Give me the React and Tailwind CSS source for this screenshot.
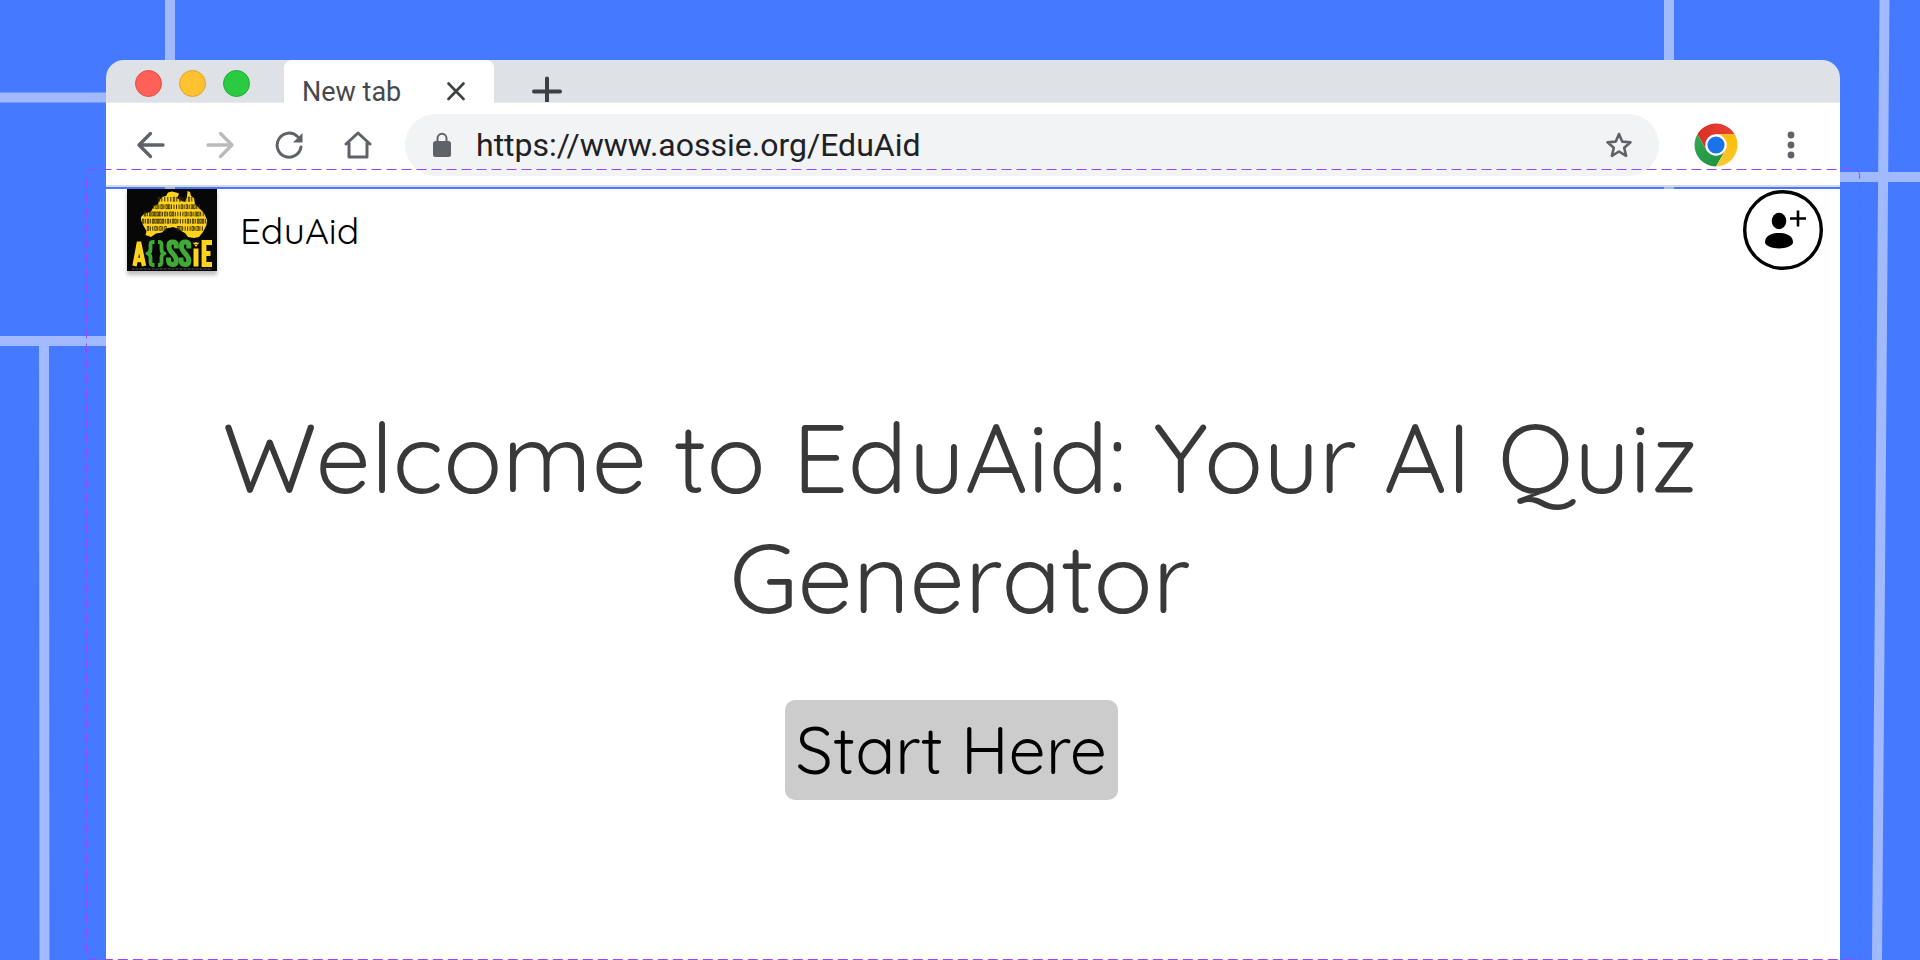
const brandFont = "font-['Quicksand',Lato,sans-serif]";

function Backdrop() {
  return (
    <svg className="absolute inset-0 h-full w-full" viewBox="0 0 1920 960" preserveAspectRatio="xMidYMin slice" aria-hidden="true">
      <g stroke="#a0b9ff" strokeWidth="10" fill="none">
        <path d="M170 0V341M1669 0V200M0 97.500H110M0 341H110M1840 177H1920" />
        <path d="M44 346L44.500 960M1884.500 0L1877 960" />
      </g>
    </svg>
  );
}

function SelectionFrame() {
  return (
    <svg className="pointer-events-none absolute -left-5 top-[109px] h-[791px] w-[calc(100%+39px)] overflow-visible" aria-hidden="true">
      <rect x="0.5" y="0.5" width="100%" height="790" rx="5" fill="none" stroke="#9747ff" strokeWidth="1" strokeDasharray="10 5" strokeDashoffset="5" />
    </svg>
  );
}

function TabStrip() {
  return (
    <div className="flex h-[43px] items-stretch rounded-t-[18px] border-b border-[#e8eaed] bg-[#dee1e6]">
      <div className="flex items-start gap-[17px] pl-[29px] pt-[10px]">
        <button aria-label="Close window" className="size-[27px] rounded-full border border-[#e24b41] bg-[#ff6159]" />
        <button aria-label="Minimise window" className="size-[27px] rounded-full border border-[#e1a32d] bg-[#ffc12f]" />
        <button aria-label="Zoom window" className="size-[27px] rounded-full border border-[#1dad2b] bg-[#2acb42]" />
      </div>
      <div className="-mb-px ml-[34px] flex w-[210px] items-start justify-between rounded-t-lg bg-white pl-[18px] pr-[28px]">
        <span className="pt-[15px] font-['Roboto',sans-serif] text-[27px] leading-[34px] text-[#45494d]">New tab</span>
        <button aria-label="Close tab" className="pt-[22px]">
          <svg width="20" height="20" viewBox="0 0 20 20" fill="none" stroke="#3c4043" strokeWidth="2.600" strokeLinecap="round">
            <path d="M2.500 1.500L17.500 17M17.500 1.500L2.500 17" />
          </svg>
        </button>
      </div>
      <button aria-label="Open a new tab" className="ml-[37px] flex items-start overflow-hidden pt-[16px]">
        <svg className="shrink-0" width="32" height="32" viewBox="0 0 32 32" fill="none" stroke="#3c4043" strokeWidth="4" strokeLinecap="round">
          <path d="M3 15.500H29M16 2.500V28.500" />
        </svg>
      </button>
    </div>
  );
}

function BackIcon() {
  return (
    <svg width="30" height="30" viewBox="0 0 30 30" fill="none" stroke="currentColor" strokeWidth="3.300" strokeLinecap="round" strokeLinejoin="round">
      <path d="M27 15H3.500M14.500 3.500L3 15L14.500 26.500" />
    </svg>
  );
}

function ForwardIcon() {
  return (
    <svg width="30" height="30" viewBox="0 0 30 30" fill="none" stroke="currentColor" strokeWidth="3.300" strokeLinecap="round" strokeLinejoin="round">
      <path d="M3 15H26.500M15.500 3.500L27 15L15.500 26.500" />
    </svg>
  );
}

function ReloadIcon() {
  return (
    <svg width="30" height="30" viewBox="0 0 30 30">
      <path d="M27 17A12 12 0 1 1 23.500 6.500" fill="none" stroke="currentColor" strokeWidth="3" strokeLinecap="round" />
      <path d="M28.500 3V12.500H19Z" fill="currentColor" />
    </svg>
  );
}

function HomeIcon() {
  return (
    <svg width="30" height="30" viewBox="0 0 30 30" fill="none" stroke="currentColor" strokeWidth="3" strokeLinecap="round" strokeLinejoin="round">
      <path d="M3 14L15 3L27 14M6 13V27H24V13" />
    </svg>
  );
}

function ChromeIcon() {
  return (
    <svg width="44" height="44" viewBox="0 0 44 44" aria-hidden="true">
      <defs>
        <linearGradient id="red" x1="0" x2="1"><stop stopColor="#d93025" /><stop offset="1" stopColor="#ea4335" /></linearGradient>
        <linearGradient id="green" x1="0" x2="1" y1="0" y2="1"><stop stopColor="#34a853" /><stop offset="1" stopColor="#1e8e3e" /></linearGradient>
        <linearGradient id="yellow" x1="0" x2="0" y1="1" y2="0"><stop stopColor="#fcc934" /><stop offset="1" stopColor="#fbbc04" /></linearGradient>
      </defs>
      <path d="M3.400 11.250A21.500 21.500 0 0 1 40.600 11.250H22L12.700 27.400Z" fill="url(#red)" />
      <path d="M3.400 11.250A21.500 21.500 0 0 0 22 43.500L31.300 27.400H12.700Z" fill="url(#green)" />
      <path d="M40.600 11.250A21.500 21.500 0 0 1 22 43.500L31.300 27.400L22 11.250Z" fill="url(#yellow)" />
      <circle cx="22" cy="22" r="10.750" fill="#fff" />
      <circle cx="22" cy="22" r="8.600" fill="#1a73e8" />
    </svg>
  );
}

function Toolbar() {
  return (
    <div className="flex h-[84px] items-center border-b-2 border-[#d7dadf] bg-white pl-[30px] pr-[34px] pt-[2px] text-[#5f6368]">
      <nav aria-label="Browser navigation" className="flex items-center gap-[39px]">
        <button aria-label="Back"><BackIcon /></button>
        <button aria-label="Forward" className="text-[#bababa]"><ForwardIcon /></button>
        <button aria-label="Reload"><ReloadIcon /></button>
        <button aria-label="Home"><HomeIcon /></button>
      </nav>
      <div className="ml-[32px] flex h-[62px] flex-1 items-center rounded-full bg-[#f1f3f4] pl-[27px] pr-[25px]">
        <svg width="20" height="26" viewBox="0 0 20 26" aria-hidden="true">
          <rect x="1" y="9" width="18" height="16" rx="2.500" fill="currentColor" />
          <path d="M5.500 10V6.300a4.500 4.500 0 0 1 9 0V10" fill="none" stroke="currentColor" strokeWidth="2" />
        </svg>
        <input
          aria-label="Address"
          defaultValue="https://www.aossie.org/EduAid"
          className="ml-[24px] min-w-0 flex-1 bg-transparent font-['Roboto',sans-serif] text-[32px] leading-[40px] text-[#202124] outline-none"
        />
        <button aria-label="Bookmark this page">
          <svg width="30" height="30" viewBox="0 0 30 30" fill="none" stroke="currentColor" strokeWidth="2.600" strokeLinejoin="round">
            <path d="M15 4L18.200 11.600L26.500 12.300L20.200 17.700L22.100 25.800L15 21.500L7.900 25.800L9.800 17.700L3.500 12.300L11.800 11.600Z" />
          </svg>
        </button>
      </div>
      <button aria-label="Profile" className="ml-[35px]"><ChromeIcon /></button>
      <button aria-label="More" className="ml-[38px]">
        <svg width="30" height="30" viewBox="0 0 30 30" fill="currentColor">
          <circle cx="15" cy="5" r="3.400" />
          <circle cx="15" cy="15" r="3.400" />
          <circle cx="15" cy="25" r="3.400" />
        </svg>
      </button>
    </div>
  );
}

const mapDigits = [
  { y: 12.5, x: 31, w: 36, t: "011110101101" },
  { y: 20, x: 26, w: 48, t: "1010100111101010011" },
  { y: 27.3, x: 17, w: 61, t: "010000010100111101010011" },
  { y: 34.5, x: 15, w: 65, t: "01010000010100111101010001" },
  { y: 41.8, x: 20, w: 20, t: "01101010" },
  { y: 41.8, x: 50, w: 27, t: "00111101011" },
];

function AossieLogo() {
  return (
    <svg className="shadow-[0_4px_4px_rgba(0,0,0,0.25)]" width="90" height="82" viewBox="0 0 90 82" role="img" aria-label="AOSSIE">
      <rect width="90" height="82" fill="#070707" />
      <path
        d="M14 28L17 25L24 22.500L27 17L31 15.500L32 12L35 8L39 7L41 3.500L45 2.500L51 4L52 5L50 9L55 12L58 13L60 8L60.500 2L63 3L64 7L67 9L68 15L73 20L77 24L80 31L79.500 36L76 43L72 48L67 49L61 48L58 44L55 42.500L52 40L46 38L39 39.500L35 43.500L29 44.500L24 48L18.500 46L19.500 42L16 36L14 31Z"
        fill="#ffd21f"
      />
      {mapDigits.map((row) => (
        <g key={row.y + "-" + row.x} stroke="#3a3000" strokeWidth="1">
          {row.t.split("").map((d, i, all) => {
            const x = row.x + (row.w * i) / all.length;
            return d === "1" ? (
              <path key={i} d={`M${x + 0.8} ${row.y - 4.5}V${row.y}`} />
            ) : (
              <rect key={i} x={x + 0.3} y={row.y - 4.3} width="1.400" height="4" fill="none" strokeWidth="0.800" />
            );
          })}
        </g>
      ))}
      <g fill="none" strokeWidth="5" strokeLinejoin="round">
        <path d="M7.500 77L12 53L17 77M9 71H15.500" stroke="#ffd21f" strokeWidth="4.400" strokeLinejoin="bevel" />
        <path d="M27.500 53H26Q23.500 53 23.500 56V60Q23.500 64 20.500 64.500Q23.500 65 23.500 69V73Q23.500 76 26 76H27.500" stroke="#3faa35" strokeWidth="3.800" />
        <path d="M31 53H32Q34.500 53 34.500 56V60Q34.500 64 37.500 64.500Q34.500 65 34.500 69V73Q34.500 76 32 76H31" stroke="#3faa35" strokeWidth="3.800" />
        <path d="M49.300 59.500V56Q49.300 53 45.700 53Q42 53 42 56V58C42 63 49.300 66 49.300 71V72Q49.300 75.500 45.700 75.500Q41.500 75.500 41.500 71V68.500" stroke="#3faa35" />
        <path d="M61.800 59.500V56Q61.800 53 58.200 53Q54.500 53 54.500 56V58C54.500 63 61.800 66 61.800 71V72Q61.800 75.500 58.200 75.500Q54 75.500 54 71V68.500" stroke="#3faa35" />
        <path d="M69 59.500V77.500" stroke="#ffd21f" />
        <path d="M85 53.500H77V75.500H85M77 64.500H83.500" stroke="#ffd21f" strokeWidth="4.800" strokeLinejoin="miter" />
      </g>
      <path d="M65.500 53L67 55.500H71L72.500 53L71 54L69 53L67 54ZM67.500 56H70.500L69 58Z" fill="#ffd21f" />
      <path d="M5 80H85" stroke="#555" strokeWidth="1" strokeDasharray="2 0.5 1 0.5" />
    </svg>
  );
}

function PageHeader() {
  return (
    <header className="flex items-start justify-between pl-[21px] pr-[17px]">
      <a href="#home" className="flex items-center gap-[23px]">
        <AossieLogo />
        <span className={brandFont + " text-[37px] leading-[45px] text-black"}>EduAid</span>
      </a>
      <button aria-label="Add account" className="pt-px">
        <svg width="80" height="80" viewBox="0 0 80 80">
          <circle cx="40" cy="40" r="38.300" fill="none" stroke="#000" strokeWidth="3.400" />
          <ellipse cx="36" cy="31" rx="7.300" ry="8.300" />
          <path d="M22 52.500C22 45.500 28.500 43 36 43S50 45.500 50 52.500C50 55.500 42.500 58.500 36 58.500S22 55.500 22 52.500Z" />
          <path d="M55 20.500V36.500M47 28.500H63" stroke="#000" strokeWidth="2.600" />
        </svg>
      </button>
    </header>
  );
}

export default function App() {
  return (
    <div className="relative flex min-h-screen flex-col overflow-hidden bg-[#4579ff] pl-[106px] pr-20 pt-[60px]">
      <Backdrop />
      <div className="relative flex flex-1 flex-col">
        <TabStrip />
        <Toolbar />
        <div className="mt-[2px] flex flex-1 flex-col bg-white">
          <PageHeader />
          <main className="flex flex-col items-center pb-[120px] pt-[126px]">
            <h1 className={brandFont + " mr-[26px] max-w-[1500px] text-center text-[98px] leading-[120px] text-[#393939]"}>
              Welcome to EduAid: Your AI Quiz Generator
            </h1>
            <button className={brandFont + " mr-[43px] mt-[63px] rounded-[10px] bg-[#cccccc] px-[11px] py-[10px] text-[66px] leading-[80px] text-black"}>
              Start Here
            </button>
          </main>
        </div>
        <SelectionFrame />
      </div>
    </div>
  );
}
